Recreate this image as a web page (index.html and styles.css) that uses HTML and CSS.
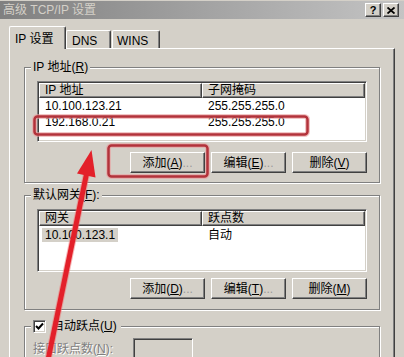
FILE: index.html
```html
<!DOCTYPE html>
<html>
<head>
<meta charset="utf-8">
<link rel="stylesheet" href="styles.css">
</head>
<body>
<div class="window">
  <div class="titlebar">
    <span class="title">高级 TCP/IP 设置</span>
    <div class="caption-btns">
      <span class="cbtn">?</span>
      <span class="cbtn"><svg width="8" height="7" viewBox="0 0 8 7"><path d="M0.5 0.5 L7.5 6.5 M7.5 0.5 L0.5 6.5" stroke="#000" stroke-width="1.8" fill="none"/></svg></span>
    </div>
  </div>
  <div class="tabs">
    <div class="tab active">IP 设置</div>
    <div class="tab dns">DNS</div>
    <div class="tab wins">WINS</div>
  </div>
  <div class="panel">
    <fieldset class="group g1">
      <legend>IP 地址(<u>R</u>)</legend>
      <div class="list">
        <div class="lhead"><div class="hc c1">IP 地址</div><div class="hc c2">子网掩码</div></div>
        <div class="row"><span class="c1">10.100.123.21</span><span class="c2">255.255.255.0</span></div>
        <div class="row"><span class="c1">192.168.0.21</span><span class="c2">255.255.255.0</span></div>
      </div>
      <div class="btns first">
        <div class="btn">添加(<u>A</u>)<span class="dim">...</span></div>
        <div class="btn">编辑(<u>E</u>)<span class="dim">...</span></div>
        <div class="btn">删除(<u>V</u>)</div>
      </div>
    </fieldset>
    <fieldset class="group g2">
      <legend>默认网关(<u>F</u>):</legend>
      <div class="list tall">
        <div class="lhead"><div class="hc c1">网关</div><div class="hc c2">跃点数</div></div>
        <div class="row gw"><span class="c1"><span class="sel">10.100.123.1</span></span><span class="c2">自动</span></div>
      </div>
      <div class="btns second">
        <div class="btn">添加(<u>D</u>)<span class="dim">...</span></div>
        <div class="btn">编辑(<u>T</u>)<span class="dim">...</span></div>
        <div class="btn">删除(<u>M</u>)</div>
      </div>
    </fieldset>
    <fieldset class="group g3">
      <legend><span class="legend-inner"><span class="chk"><svg width="9" height="9" viewBox="0 0 9 9"><path d="M1 4 L3.5 6.5 L8 1.5" stroke="#000" stroke-width="2" fill="none"/></svg></span><span class="chk-label">自动跃点(<u>U</u>)</span></span></legend>
      <div class="metric">
        <span class="disabled">接口跃点数(<u>N</u>):</span>
        <span class="input"></span>
      </div>
    </fieldset>
  </div>
  <svg class="marks" width="404" height="357" viewBox="0 0 404 357">
    <rect x="34.5" y="116.5" width="273" height="18" rx="3" fill="none" stroke="#e9a0a0" stroke-width="5" opacity="0.6"/>
    <rect x="34.5" y="116.5" width="273" height="18" rx="3" fill="none" stroke="#b3323a" stroke-width="2.5"/>
    <rect x="108.5" y="145.5" width="99" height="31" rx="3" fill="none" stroke="#e9a0a0" stroke-width="5" opacity="0.6"/>
    <rect x="108.5" y="145.5" width="99" height="31" rx="3" fill="none" stroke="#b3323a" stroke-width="2.5"/>
    <line x1="48" y1="360" x2="86.5" y2="174" stroke="#f07070" stroke-width="7" opacity="0.5"/>
    <line x1="48" y1="360" x2="86.5" y2="174" stroke="#e3202a" stroke-width="5"/>
    <polygon points="91.5,150 95.5,177.5 77,173.5" fill="#e3202a"/>
  </svg>
</div>
</body>
</html>
```

FILE: styles.css
```css
* { box-sizing: border-box; }
html, body { margin: 0; padding: 0; }
body {
  background: #d4d0c8;
  font-family: "Liberation Sans", "Noto Sans CJK SC", sans-serif;
  font-size: 12px;
  color: #000;
}
.window {
  position: relative;
  width: 404px;
  height: 357px;
  overflow: hidden;
  padding-top: 1px;
}
.titlebar {
  height: 18px;
  display: flex;
  align-items: center;
  justify-content: space-between;
  background: linear-gradient(to right, #808080, #c4c4c4);
  padding: 0 5px 0 3px;
}
.title { color: #d4d0c8; line-height: 14px; }
.caption-btns { display: flex; gap: 2px; }
.cbtn {
  width: 16px;
  height: 14px;
  background: #d4d0c8;
  border: 1px solid;
  border-color: #fff #404040 #404040 #fff;
  box-shadow: inset -1px -1px 0 #808080;
  display: flex;
  align-items: center;
  justify-content: center;
  font-weight: bold;
  font-size: 11px;
  line-height: 12px;
}
.tabs {
  display: flex;
  align-items: flex-end;
  height: 22px;
  margin-top: 7px;
  padding-left: 9px;
}
.tab {
  height: 18px;
  border-top: 1px solid #fff;
  border-left: 1px solid #fff;
  border-right: 1px solid #404040;
  box-shadow: inset -1px 0 0 #808080;
  border-radius: 2px 2px 0 0;
  padding: 3px 0 0 5px;
  line-height: 14px;
  background: #d4d0c8;
}
.tab.active {
  height: 23px;
  width: 57px;
  margin-bottom: -1px;
  position: relative;
  z-index: 1;
  padding-top: 5px;
}
.tab.dns { width: 45px; }
.tab.wins { width: 48px; margin-left: 1px; padding-left: 4px; }
.panel {
  margin-left: 9px;
  width: 386px;
  height: 320px;
  border-top: 1px solid #fff;
  border-left: 1px solid #fff;
  border-right: 1px solid #404040;
  box-shadow: inset -1px 0 0 #808080;
  padding: 11px 0 0 14px;
}
.group {
  margin: 0;
  width: 356px;
  min-width: 0;
  border: 1px solid #808080;
  box-shadow: inset 1px 1px 0 #fff, 1px 1px 0 #fff;
  padding: 0 0 9px 0;
}
.group legend {
  margin-left: 6px;
  padding: 0 2px;
  line-height: 14px;
  background: #d4d0c8;
}
.g2 { margin-top: 5px; padding-bottom: 10px; }
.g3 { margin-top: 9px; height: 60px; }
.list {
  margin: 7px 12px 0;
  height: 61px;
  background: #fff;
  border: 1px solid;
  border-color: #808080 #fff #fff #808080;
  box-shadow: inset 1px 1px 0 #404040, inset -1px -1px 0 #d4d0c8;
  padding: 1px;
}
.list.tall { height: 63px; }
.lhead { display: flex; height: 15px; }
.hc {
  background: #d4d0c8;
  border: 1px solid;
  border-color: #fff #404040 #404040 #fff;
  box-shadow: inset -1px -1px 0 #808080;
  padding-left: 5px;
  line-height: 12px;
}
.hc.c1 { width: 163px; }
.hc.c2 { flex: 1; }
.row { display: flex; align-items: center; height: 16px; line-height: 16px; }
.row .c1 { width: 163px; padding-left: 6px; }
.row .c2 { padding-left: 6px; }
.row.gw { margin-top: 1px; }
.row.gw .c1 { padding-left: 3px; }
.sel {
  display: inline-block;
  background: #d4d0c8;
  padding: 0 3px;
  line-height: 14px;
}
.btns {
  display: flex;
  justify-content: flex-end;
  gap: 6px;
  margin: 10px 12px 0;
}
.btns.second { margin-top: 6px; }
.btn {
  width: 75px;
  height: 21px;
  border: 1px solid;
  border-color: #fff #404040 #404040 #fff;
  box-shadow: inset -1px -1px 0 #808080;
  display: flex;
  align-items: center;
  justify-content: center;
  line-height: 14px;
}
.dim { color: #9a9a9a; }
.legend-inner { display: flex; align-items: center; }
.chk {
  width: 13px;
  height: 13px;
  background: #fff;
  border: 1px solid;
  border-color: #808080 #fff #fff #808080;
  box-shadow: inset 1px 1px 0 #404040, inset -1px -1px 0 #d4d0c8;
  display: flex;
  align-items: center;
  justify-content: center;
}
.chk-label { margin-left: 4px; padding: 0 2px; }
.metric {
  display: flex;
  align-items: center;
  margin: 5px 0 0 8px;
}
.disabled {
  width: 100px;
  color: #808080;
  text-shadow: 1px 1px 0 #fff;
  line-height: 14px;
}
.input {
  width: 60px;
  height: 22px;
  border: 1px solid;
  border-color: #808080 #fff #fff #808080;
  box-shadow: inset 1px 1px 0 #404040, inset -1px -1px 0 #d4d0c8;
  background: #d4d0c8;
}
.marks {
  position: absolute;
  left: 0;
  top: 0;
  pointer-events: none;
}
```
